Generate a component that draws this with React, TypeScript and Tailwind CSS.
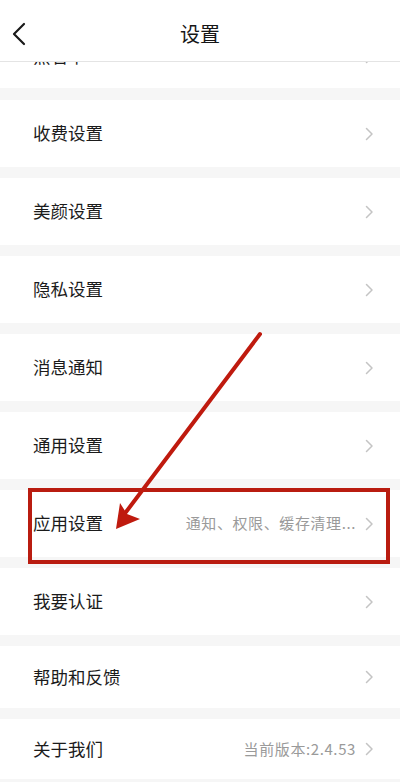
import React from "react";

type Row = {
  label: string;
  sub?: string;
  h?: string;
};

const rows: Row[] = [
  { label: "收费设置" },
  { label: "美颜设置" },
  { label: "隐私设置" },
  { label: "消息通知" },
  { label: "通用设置" },
  { label: "应用设置", sub: "通知、权限、缓存清理..." },
  { label: "我要认证" },
  { label: "帮助和反馈", h: "h-[62px]" },
  { label: "关于我们", sub: "当前版本:2.4.53", h: "h-[60px]" },
];

function Chevron() {
  return (
    <svg width="9" height="14" viewBox="0 0 9 14" fill="none">
      <path d="M1.5 1.5L7 7l-5.5 5.5" stroke="#c4c4c4" strokeWidth="1.5" strokeLinecap="round" strokeLinejoin="round" />
    </svg>
  );
}

function SettingRow({ row }: { row: Row }) {
  return (
    <div className={`${row.h ?? "h-[67px]"} bg-white flex items-center pl-[33px] pr-[26px]`}>
      <span className="text-[17.5px] text-[#1b1b1b]">{row.label}</span>
      <div className="ml-auto flex items-center gap-[9px]">
        {row.sub && <span className="text-[15px] text-[#9a9a9a] tracking-[0.6px]">{row.sub}</span>}
        <Chevron />
      </div>
    </div>
  );
}

export default function App() {
  return (
    <div
      className="relative w-[400px] h-[782px] overflow-hidden bg-[#f6f6f6]"
      style={{ fontFamily: '"Noto Sans CJK SC", "Noto Sans", sans-serif' }}
    >
      {/* header */}
      <div className="relative h-[62px] bg-white border-b border-[#e4e4e4] flex items-center justify-center">
        <svg className="absolute left-[11px] top-[22px]" width="16" height="24" viewBox="0 0 16 24" fill="none">
          <path d="M13 2L3 12l10 10" stroke="#1a1a1a" strokeWidth="2.2" strokeLinecap="round" strokeLinejoin="round" />
        </svg>
        <span className="text-[20px] text-[#161616] mt-[7px]">设置</span>
      </div>

      {/* list, scrolled: first row is half under the header */}
      <div className="flex flex-col">
        <div className="h-[26px] bg-white overflow-hidden">
          <div className="h-[67px] -mt-[39px] flex items-center pl-[33px] pr-[26px]">
            <span className="text-[17.5px] text-[#1b1b1b]">黑名单</span>
            <div className="ml-auto">
              <Chevron />
            </div>
          </div>
        </div>
        <div className="flex flex-col gap-[11px] mt-[12px]">
          {rows.map((row) => (
            <SettingRow key={row.label} row={row} />
          ))}
        </div>
      </div>

      {/* annotation */}
      <div className="absolute left-[28px] top-[488px] w-[362px] h-[76px] border-[4px] border-[#b91c10]" />
      <svg className="absolute left-0 top-0" width="400" height="782" viewBox="0 0 400 782" fill="none">
        <line x1="260" y1="334" x2="126" y2="512" stroke="#bf1a0e" strokeWidth="4" strokeLinecap="round" />
        <polygon points="116,529 120,503 127,514 140,519" fill="#bf1a0e" />
      </svg>
    </div>
  );
}
